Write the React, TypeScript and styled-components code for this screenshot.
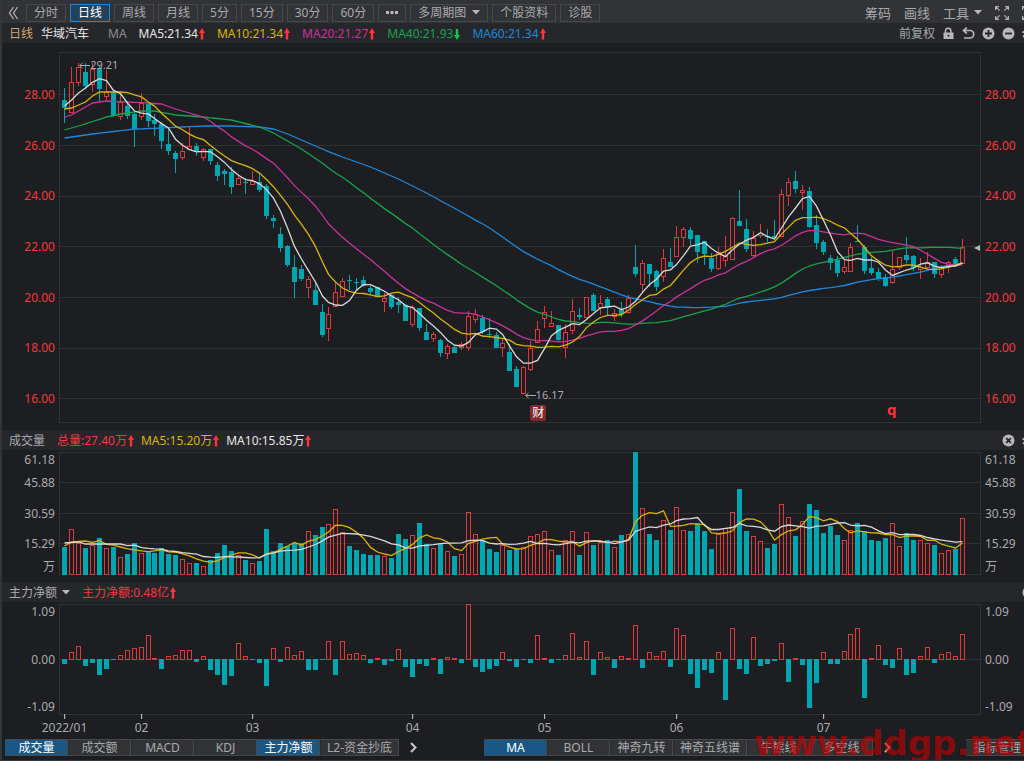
import React from 'react';
import styled, { createGlobalStyle } from 'styled-components';

const c = {
  bg: '#1d1e22',
  bar: '#323337',
  head: '#26272b',
  line: '#303135',
  text: '#a9aaad',
  dim: '#8b8c8f',
  white: '#e6e6e6',
  red: '#f5383b',
  teal: '#00a7b1',
  yellow: '#dcb400',
  pink: '#c8329b',
  green: '#16a34c',
  blue: '#1e88dc',
};

const GlobalStyle = createGlobalStyle`
  * { box-sizing: border-box; }
  body {
    margin: 0;
    background: ${c.bg};
    color: ${c.text};
    font-family: "Noto Sans", "Noto Sans CJK SC", sans-serif;
    font-size: 12px;
    line-height: 16px;
    overflow-x: hidden;
  }
  button { font: inherit; color: inherit; cursor: pointer; }
  svg { display: block; flex: none; }
`;

const Page = styled.div`
  position: relative;
  border-left: 2px solid #35363a;
  border-bottom: 1px solid #35363a;
  overflow: hidden;
`;

const Toolbar = styled.header`
  display: flex;
  align-items: center;
  height: 23px;
  padding: 2px 0 0 6px;
  background: ${c.bar};
  overflow: hidden;
`;

const Periods = styled.nav`
  display: flex;
  gap: 4px;
  margin-left: 7px;
`;

const PeriodButton = styled.button<{ $active?: boolean }>`
  display: flex;
  align-items: center;
  gap: 6px;
  height: 18px;
  padding: 0 7px;
  white-space: nowrap;
  border: 1px solid ${p => (p.$active ? '#1f86d6' : '#47484c')};
  background: ${p => (p.$active ? '#24415a' : 'transparent')};
  color: ${p => (p.$active ? '#fff' : c.text)};
`;

const Tools = styled.div<{ $gap: number; $out: number }>`
  display: flex;
  align-items: center;
  gap: ${p => p.$gap}px;
  margin-left: auto;
  margin-right: -${p => p.$out}px;
`;

const ToolButton = styled.button<{ $size?: number }>`
  display: flex;
  align-items: center;
  gap: 5px;
  padding: 0;
  border: 0;
  background: none;
  white-space: nowrap;
  font-size: ${p => p.$size ?? 12}px;
`;

const InfoBar = styled.div`
  display: flex;
  align-items: center;
  gap: 12px;
  height: 20px;
  padding: 1px 0 0 7px;
  background: ${c.head};
  overflow: hidden;
  white-space: nowrap;
`;

const Names = styled.div`
  display: flex;
  gap: 8px;
  margin-right: 7px;
`;

const Label = styled.span<{ $color?: string }>`
  display: inline-flex;
  align-items: center;
  gap: 1px;
  color: ${p => p.$color ?? c.text};
`;

const Readings = styled.div<{ $gap: number }>`
  display: flex;
  gap: ${p => p.$gap}px;
`;

const Panel = styled.section<{ $height: number; $top: number }>`
  display: flex;
  height: ${p => p.$height}px;
  > div { padding-top: ${p => p.$top}px; }
`;

const Plot = styled.div`
  position: relative;
  flex: 1;
  min-width: 0;
  > svg { width: 100%; }
`;

const Axis = styled.div<{ $side: 'left' | 'right'; $color?: string }>`
  display: flex;
  flex-direction: column;
  justify-content: space-between;
  width: ${p => (p.$side === 'left' ? 57 : 43)}px;
  padding-left: ${p => (p.$side === 'left' ? 0 : 4)}px;
  padding-right: ${p => (p.$side === 'left' ? 4 : 0)}px;
  text-align: ${p => (p.$side === 'left' ? 'right' : 'left')};
  color: ${p => p.$color ?? c.text};
`;

const PriceAxis = styled(Axis)`
  && { padding-top: 44px; }
  padding-bottom: 23px;
`;

const VolumeAxis = styled(Axis)`
  display: grid;
  grid-template-rows: 23px 31px 30px 23px 16px;
  justify-content: stretch;
`;

const Mark = styled.div<{ $left: string; $top: number }>`
  position: absolute;
  left: ${p => p.$left};
  top: ${p => p.$top}px;
  display: flex;
  align-items: center;
  font-size: 11px;
  white-space: nowrap;
`;

const Badge = styled(Mark)`
  justify-content: center;
  width: 16px;
  height: 16px;
  border-radius: 2px;
  background: #822b2d;
  color: #fff;
  font-size: 12px;
`;

const Alert = styled(Mark)`
  color: #ff3335;
  font-size: 15px;
  font-weight: 700;
`;

const Dates = styled.div`
  position: relative;
  height: 24px;
  margin: 0 43px 0 57px;
`;

const DateTick = styled.span`
  position: absolute;
  top: 0;
  transform: translateX(-50%);
  padding-top: 5px;
  &::before {
    content: '';
    position: absolute;
    top: -1px;
    left: 50%;
    width: 1px;
    height: 5px;
    background: #cfcfcf;
  }
`;

const Footer = styled.footer`
  display: flex;
  align-items: center;
  height: 21px;
  padding: 0 0 4px 3px;
`;

const Half = styled.div<{ $wide?: boolean }>`
  display: flex;
  align-items: center;
  flex: ${p => (p.$wide ? '1 0 0' : '0 0 47%')};
  min-width: 0;
`;

const Tab = styled.button<{ $active?: boolean }>`
  height: 17px;
  min-width: 63px;
  padding: 0 6px;
  line-height: 15px;
  white-space: nowrap;
  border: 1px solid #47484c;
  border-left-color: ${p => (p.$active ? '#1b5784' : '#2b2c30')};
  background: ${p => (p.$active ? '#1b5784' : c.bar)};
  color: ${p => (p.$active ? '#fff' : c.text)};
`;

const More = styled(ToolButton)`
  margin-left: 11px;
`;

const Manage = styled(Tab)`
  margin-left: auto;
  margin-right: -5px;
`;

const Watermark = styled.div`
  position: absolute;
  left: 752px;
  bottom: -3px;
  font-family: "DejaVu Sans", sans-serif;
  font-size: 34px;
  line-height: 40px;
  font-weight: 700;
  color: #c60000;
  opacity: 0.62;
  white-space: nowrap;
  pointer-events: none;
`;

/* ---------- icons ---------- */

const Arrow = ({ down }: { down?: boolean }) => (
  <svg width="6" height="12" viewBox="0 0 6 12">
    <path
      d={down ? 'M3 12 0 7H1.800V1H4.200V7H6Z' : 'M3 0 6 5H4.200V11.500H1.800V5H0Z'}
      fill={down ? '#12c552' : '#ff3335'}
    />
  </svg>
);

const Caret = () => (
  <svg width="8" height="5" viewBox="0 0 8 5"><path d="M0 0H8L4 4.5Z" fill="#b8b8ba" /></svg>
);

const DoubleLeft = () => (
  <svg width="11" height="14" viewBox="0 0 11 14" fill="none" stroke="#b8b8ba" strokeWidth="1.2">
    <path d="M5.5 1 1.5 7l4 6M9.5 1l-4 6 4 6" />
  </svg>
);

const Chevron = () => (
  <svg width="7" height="11" viewBox="0 0 7 11" fill="none" stroke="#c8c8ca" strokeWidth="2">
    <path d="M1 1l4.500 4.500L1 10" />
  </svg>
);

const Dots = () => (
  <svg width="12" height="3" viewBox="0 0 12 3" fill="#b8b8ba">
    <path d="M0 0h3v3H0zM4.500 0h3v3h-3zM9 0h3v3H9z" />
  </svg>
);

const Expand = () => (
  <svg width="14" height="14" viewBox="0 0 14 14" fill="none" stroke="#b0b0b3" strokeWidth="1.2">
    <path d="M.6 4V.6H4M.6.6l4 4M10 .6h3.400V4M13.400.6l-4 4M.6 10v3.400H4M.6 13.400l4-4M10 13.400h3.400V10M13.400 13.400l-4-4" />
  </svg>
);

const Lock = () => (
  <svg width="13" height="13" viewBox="0 0 13 13">
    <path d="M3.500 6V4a2.700 2.700 0 0 1 5.400 0v2" fill="none" stroke="#b8b8ba" strokeWidth="1.500" />
    <path d="M1.500 5.500h10V12h-10z" fill="#b8b8ba" />
    <circle cx="6.500" cy="8.800" r="1" fill="#26272b" />
  </svg>
);

const Undo = () => (
  <svg width="13" height="13" viewBox="0 0 13 13" fill="none" stroke="#b8b8ba" strokeWidth="1.700">
    <path d="M2 3.500h6a3.700 3.700 0 0 1 0 7.500H2" />
    <path d="M4.800.5 1.500 3.500l3.300 3" />
  </svg>
);

const Disc = ({ d }: { d: string }) => (
  <svg width="13" height="13" viewBox="0 0 13 13">
    <circle cx="6.500" cy="6.500" r="6" fill="#b8b8ba" />
    <path d={d} stroke="#26272b" strokeWidth="1.800" />
  </svg>
);

const Gear = () => (
  <svg width="13" height="13" viewBox="0 0 13 13" fill="none" stroke="#b8b8ba">
    <circle cx="6.500" cy="6.500" r="3.500" strokeWidth="2" />
    <circle cx="6.500" cy="6.500" r="5.300" strokeWidth="2" strokeDasharray="2.100 2.060" />
  </svg>
);

const LeftPointer = () => (
  <svg width="11" height="7" viewBox="0 0 11 7" fill="none" stroke="#a9aaad">
    <path d="M.7 3.500H11M3.500 1 .7 3.500l2.800 2.500" />
  </svg>
);

/* ---------- data ---------- */

// One candle per item: direction, high, body top, body bottom, low on the price scale.
const candles = `
g88,100,108,123 r67,82,112,113 r63,67,82,86 g63,72,86,89 r63,69,84,92 g66,68,89,101 r70,92,96,100
g92,92,116,117 r94,102,116,120 g103,106,116,119 g113,114,129,147 r93,103,116,120 g102,104,121,127
g114,120,124,136 g122,124,141,149 g128,144,151,155 g151,153,159,173 r143,151,157,160 r126,146,149,150
g143,146,152,156 r148,149,157,161 g149,149,161,165 g162,165,176,181 g169,171,174,185 g167,172,187,194
r176,178,184,184 g178,182,183,194 r171,181,184,185 g173,182,190,192 g184,186,216,219 g215,218,221,228
g227,234,248,252 g245,246,265,267 g255,267,282,298 g265,269,279,281 r276,279,287,298 g281,290,305,305
g304,312,335,337 r307,314,328,341 r283,292,306,306 r278,281,296,297 g275,280,281,290 g278,282,283,291
g276,280,286,287 g286,288,292,294 g287,287,297,297 r293,298,301,312 g294,295,307,309 g297,302,305,313
g304,305,321,321 r305,307,324,327 g308,308,328,331 g324,332,340,340 r332,334,338,342 g339,340,353,357
r344,346,353,359 g345,347,353,353 r342,344,347,350 r311,316,347,351 r309,314,319,323 g315,318,332,334
g318,334,335,338 g332,335,348,348 r338,343,347,357 g344,352,371,371 g366,369,387,387 r366,367,393,394
r341,348,369,371 r321,329,342,342 r306,312,318,328 r311,323,326,327 g325,325,340,342 r324,332,347,358
r299,311,330,334 g308,315,317,320 r297,297,317,318 g293,295,311,311 r295,303,307,315 g297,299,307,316
r309,313,316,321 g302,309,314,317 r295,298,312,314 g245,267,274,277 r260,263,284,293 g264,264,274,287
g270,271,287,291 r249,258,276,282 g248,262,267,267 r226,237,256,256 r227,229,237,247 g227,230,239,245
g235,235,252,263 g241,241,254,265 g253,258,269,272 r247,252,268,270 r236,256,260,267 r217,218,259,260
g190,221,226,226 g219,229,249,252 r231,238,255,258 r224,233,235,238 g229,236,237,242 g220,236,238,240
r189,194,236,236 r178,182,195,206 g171,181,189,193 r185,190,192,210 g187,191,227,228 g215,225,243,249
g240,242,252,255 g255,258,263,270 g256,260,273,277 r259,267,271,274 r243,247,271,271 g225,241,242,242
g245,247,271,274 g257,268,273,275 g268,272,278,281 g274,277,286,287 r251,269,282,284 r257,257,267,270
g237,255,260,263 g255,256,268,271 r258,267,269,279 r252,262,267,269 g262,262,274,278 r265,267,274,278
r261,262,267,273 g257,259,265,265 r239,247,263,263`
  .trim()
  .split(/\s+/)
  .map(s => {
    const [high, top, bottom, low] = s.slice(1).split(',').map(Number);
    const up = s[0] === 'r';
    return { up, high, top, bottom, low, close: up ? top : bottom };
  });

const volumes = [
  28, 46, 32, 27, 30, 37, 27, 28, 18, 21, 32, 22, 24, 22, 27, 21, 20, 16, 12, 12, 9, 15, 22, 30, 24, 20, 15, 12, 14, 46,
  24, 32, 29, 32, 32, 44, 40, 48, 51, 66, 43, 29, 25, 21, 20, 20, 19, 17, 41, 36, 40, 52, 31, 27, 31, 24, 19, 21, 63,
  41, 35, 26, 23, 30, 25, 26, 28, 39, 41, 44, 25, 20, 35, 44, 20, 43, 30, 33, 35, 28, 40, 41, 123, 67, 41, 35, 55, 45,
  68, 45, 44, 52, 44, 26, 41, 47, 63, 86, 44, 39, 34, 27, 31, 71, 58, 39, 54, 71, 65, 42, 49, 40, 35, 45, 52, 44, 35,
  34, 37, 52, 29, 42, 35, 35, 32, 30, 22, 25, 26, 57,
];

const flows = [
  -5, 7, 13, -7, -4, -16, -10, -1, 4, 9, 11, 12, 24, 1, -10, 3, 4, 9, 9, -3, 3, -11, -16, -26, -17, 16, 3, -1, -4, -27,
  11, -3, 12, 4, 8, -11, -11, -1, 18, -16, 18, 5, 6, 4, -4, 1, -6, -2, 10, -8, -18, -5, -7, 1, -15, 2, 1, -4, 55, -8,
  -13, -10, -7, 7, -2, -8, -1, -4, 24, 1, -4, -1, 4, 26, 2, 18, -16, 7, 2, -9, 3, 1, 34, -9, 7, 3, 8, -8, 31, 24, -15,
  -29, -11, -14, 7, -41, 31, -10, -15, 22, -7, -5, -2, 16, -23, 1, -6, -49, -24, 7, -5, -5, 8, 25, 31, -39, 1, 14, -6,
  -9, 11, -16, -14, 3, 12, -4, 5, 7, 3, 25,
];

type Knot = [number, number];

// Averages for the days whose window starts before the first candle on screen.
const head = (...knots: Knot[]) => {
  const out: number[] = [];
  for (let k = 0; k < knots.length; k++) {
    const [i, y] = knots[k];
    const next = knots[k + 1];
    if (!next) {
      out.push(y);
      break;
    }
    for (let j = i; j < next[0]; j++) out.push(y + ((next[1] - y) * (j - i)) / (next[0] - i));
  }
  return out;
};

const average = (values: number[], size: number, start: number[]) =>
  values.map((_, i) =>
    i < size - 1 ? start[i] : values.slice(i - size + 1, i + 1).reduce((a, b) => a + b, 0) / size,
  );

const WIDTH = 922;
const column = (i: number) => Math.round(5 + 6.96 * i);
const points = (ys: number[]) => ys.map((y, i) => `${column(i) + 0.5},${y.toFixed(1)}`).join(' ');
const closes = candles.map(k => k.close);

const priceLines = [
  { color: c.blue, ys: average(closes, 60, head([0, 138], [4, 134], [10, 129], [14, 128], [20, 126], [24, 126], [28, 127], [30, 129], [32, 134], [37, 149], [40, 157], [44, 167], [48, 179], [52, 193], [58, 216])) },
  { color: c.green, ys: average(closes, 40, head([0, 130], [2, 126], [6, 117], [8, 114], [11, 111], [13, 111], [16, 115], [20, 117], [24, 120], [28, 127], [30, 133], [34, 149], [38, 168])) },
  { color: c.pink, ys: average(closes, 20, head([0, 117], [1, 115], [4, 103], [6, 101], [12, 103], [14, 104], [16, 109], [18, 113])) },
  { color: c.yellow, ys: average(closes, 10, head([0, 109], [1, 108], [3, 102], [4, 96], [5, 92], [8, 92])) },
  { color: '#d8d8d8', ys: average(closes, 5, head([0, 106], [1, 100], [2, 93], [3, 88])) },
];

const volumeLines = [
  { color: c.yellow, ys: average(volumes, 5, head([0, 29], [1, 33], [3, 34])) },
  { color: '#d8d8d8', ys: average(volumes, 10, head([0, 32], [2, 33], [3, 31], [8, 31])) },
];

/* ---------- charts ---------- */

const GridLines = ({ rows, top, bottom }: { rows: number[]; top: number; bottom: number }) => (
  <g fill="none" stroke={c.line}>
    {rows.map(y => <path key={y} d={`M1 ${y}H921`} />)}
    <rect x="0.5" y={top + 0.5} width={WIDTH - 1} height={bottom - top - 1} />
  </g>
);

const Bar = ({ i, top, bottom, up }: { i: number; top: number; bottom: number; up: boolean }) => {
  const x = column(i);
  const h = Math.max(bottom - top, 1);
  return up && h > 1 ? (
    <rect x={x - 1.5} y={top + 0.5} width="4" height={h - 1} fill="none" stroke="#e0383b" />
  ) : (
    <rect x={x - 2} y={top} width="5" height={h} fill={up ? '#b23033' : c.teal} />
  );
};

const PriceChart = () => (
  <svg height="371" viewBox={`0 52 ${WIDTH} 371`} preserveAspectRatio="none" role="img" aria-label="日线">
    <GridLines rows={[94.5, 145.5, 196.5, 246.5, 297.5, 348.5, 398.5]} top={52} bottom={423} />
    {candles.map((k, i) => {
      const x = column(i) + 0.5;
      return (
        <g key={i}>
          <path
            d={`M${x} ${k.high}V${k.top}M${x} ${k.bottom}V${k.low}`}
            stroke={k.up ? '#e0383b' : c.teal}
          />
          <Bar i={i} top={k.top} bottom={k.bottom + (k.up ? 1 : 0)} up={k.up} />
        </g>
      );
    })}
    {priceLines.map(l => (
      <polyline key={l.color} points={points(l.ys)} fill="none" stroke={l.color} strokeWidth="1.3" />
    ))}
    <path d="M915 248l6-3v6z" fill="#b8b8ba" />
  </svg>
);

const VolumeChart = () => (
  <svg height="123" viewBox={`0 0 ${WIDTH} 123`} preserveAspectRatio="none" role="img" aria-label="成交量">
    <GridLines rows={[30.5, 61.5, 91.5]} top={0} bottom={123} />
    {volumes.map((v, i) => <Bar key={i} i={i} top={123 - v} bottom={123} up={candles[i].up} />)}
    {volumeLines.map(l => (
      <polyline key={l.color} points={points(l.ys.map(v => 123 - v))} fill="none" stroke={l.color} strokeWidth="1.3" />
    ))}
  </svg>
);

const FlowChart = () => (
  <svg height="111" viewBox={`0 0 ${WIDTH} 111`} preserveAspectRatio="none" role="img" aria-label="主力净额">
    <GridLines rows={[55.5]} top={0} bottom={111} />
    {flows.map((v, i) => (
      <Bar key={i} i={i} top={v > 0 ? 55 - v : 55} bottom={v > 0 ? 56 : 55 - v} up={v > 0} />
    ))}
  </svg>
);

/* ---------- page ---------- */

const periods = ['分时', '日线', '周线', '月线', '5分', '15分', '30分', '60分'];
const prices = ['28.00', '26.00', '24.00', '22.00', '20.00', '18.00', '16.00'];
const amounts = ['61.18', '45.88', '30.59', '15.29', '万'];
const nets = ['1.09', '0.00', '-1.09'];
const dates: [string, number][] = [['2022/01', 0], ['02', 11], ['03', 27], ['04', 50], ['05', 69], ['06', 88], ['07', 109]];
const averages = [
  { text: 'MA5:21.34', color: c.white },
  { text: 'MA10:21.34', color: c.yellow },
  { text: 'MA20:21.27', color: c.pink },
  { text: 'MA40:21.93', color: c.green, down: true },
  { text: 'MA60:21.34', color: c.blue },
];
const leftTabs = ['成交量', '成交额', 'MACD', 'KDJ', '主力净额', 'L2-资金抄底'];
const rightTabs = ['MA', 'BOLL', '神奇九转', '神奇五线谱', '牛熊线', '多空线'];

const percent = (i: number) => `${((column(i) + 0.5) / WIDTH) * 100}%`;
const spans = (items: string[]) => items.map(t => <span key={t}>{t}</span>);

export default function App() {
  return (
    <Page>
      <GlobalStyle />
      <Toolbar>
        <ToolButton aria-label="收起"><DoubleLeft /></ToolButton>
        <Periods>
          {periods.map(p => <PeriodButton key={p} $active={p === '日线'}>{p}</PeriodButton>)}
          <PeriodButton aria-label="更多周期"><Dots /></PeriodButton>
          <PeriodButton>多周期图<Caret /></PeriodButton>
          <PeriodButton>个股资料</PeriodButton>
          <PeriodButton>诊股</PeriodButton>
        </Periods>
        <Tools $gap={13} $out={12}>
          <ToolButton $size={13}>筹码</ToolButton>
          <ToolButton $size={13}>画线</ToolButton>
          <ToolButton $size={13}>工具<Caret /></ToolButton>
          <ToolButton aria-label="全屏"><Expand /></ToolButton>
          <ToolButton aria-label="关闭"><Expand /></ToolButton>
        </Tools>
      </Toolbar>

      <InfoBar>
        <Names>
          <Label $color="#d0a474">日线</Label>
          <Label $color={c.white}>华域汽车</Label>
        </Names>
        <Label $color={c.dim}>MA</Label>
        <Readings $gap={12}>
          {averages.map(a => (
            <Label key={a.text} $color={a.color}>{a.text}<Arrow down={a.down} /></Label>
          ))}
        </Readings>
        <Tools $gap={7} $out={11}>
          <ToolButton>前复权</ToolButton>
          <ToolButton aria-label="锁定"><Lock /></ToolButton>
          <ToolButton aria-label="撤销"><Undo /></ToolButton>
          <ToolButton aria-label="放大"><Disc d="M3 6.500h7M6.500 3v7" /></ToolButton>
          <ToolButton aria-label="缩小"><Disc d="M3 6.500h7" /></ToolButton>
          <ToolButton aria-label="设置"><Gear /></ToolButton>
        </Tools>
      </InfoBar>

      <Panel $height={387} $top={9}>
        <PriceAxis $side="left" $color={c.red}>{spans(prices)}</PriceAxis>
        <Plot>
          <PriceChart />
          <Mark $left="2.2%" $top={14}><LeftPointer />29.21</Mark>
          <Mark $left="50.5%" $top={344}><LeftPointer />16.17</Mark>
          <Badge $left="51.1%" $top={362}>财</Badge>
          <Alert $left="89.8%" $top={358}>q</Alert>
        </Plot>
        <PriceAxis $side="right" $color={c.red}>{spans(prices)}</PriceAxis>
      </Panel>

      <InfoBar>
        <Label>成交量</Label>
        <Readings $gap={7}>
          <Label $color={c.red}>总量:27.40万<Arrow /></Label>
          <Label $color={c.yellow}>MA5:15.20万<Arrow /></Label>
          <Label $color={c.white}>MA10:15.85万<Arrow /></Label>
        </Readings>
        <Tools $gap={7} $out={11}>
          <ToolButton aria-label="关闭成交量"><Disc d="M4.200 4.200l4.600 4.600M8.800 4.200l-4.600 4.600" /></ToolButton>
          <ToolButton aria-label="成交量设置"><Gear /></ToolButton>
        </Tools>
      </InfoBar>

      <Panel $height={132} $top={2}>
        <VolumeAxis $side="left">{spans(amounts)}</VolumeAxis>
        <Plot><VolumeChart /></Plot>
        <VolumeAxis $side="right">{spans(amounts)}</VolumeAxis>
      </Panel>

      <InfoBar>
        <ToolButton>主力净额<Caret /></ToolButton>
        <Label $color={c.red}>主力净额:0.48亿<Arrow /></Label>
        <Tools $gap={7} $out={11}>
          <ToolButton aria-label="关闭主力净额"><Disc d="M4.200 4.200l4.600 4.600M8.800 4.200l-4.600 4.600" /></ToolButton>
        </Tools>
      </InfoBar>

      <Panel $height={113} $top={2}>
        <Axis $side="left">{spans(nets)}</Axis>
        <Plot><FlowChart /></Plot>
        <Axis $side="right">{spans(nets)}</Axis>
      </Panel>

      <Dates>
        {dates.map(([text, i]) => <DateTick key={text} style={{ left: percent(i) }}>{text}</DateTick>)}
      </Dates>

      <Footer>
        <Half>
          {leftTabs.map(t => <Tab key={t} $active={t === '成交量' || t === '主力净额'}>{t}</Tab>)}
          <More aria-label="更多指标"><Chevron /></More>
        </Half>
        <Half $wide>
          {rightTabs.map(t => <Tab key={t} $active={t === 'MA'}>{t}</Tab>)}
          <More aria-label="更多主图指标"><Chevron /></More>
          <Manage>指标管理</Manage>
        </Half>
      </Footer>
      <Watermark>www.ddgp.net</Watermark>
    </Page>
  );
}
